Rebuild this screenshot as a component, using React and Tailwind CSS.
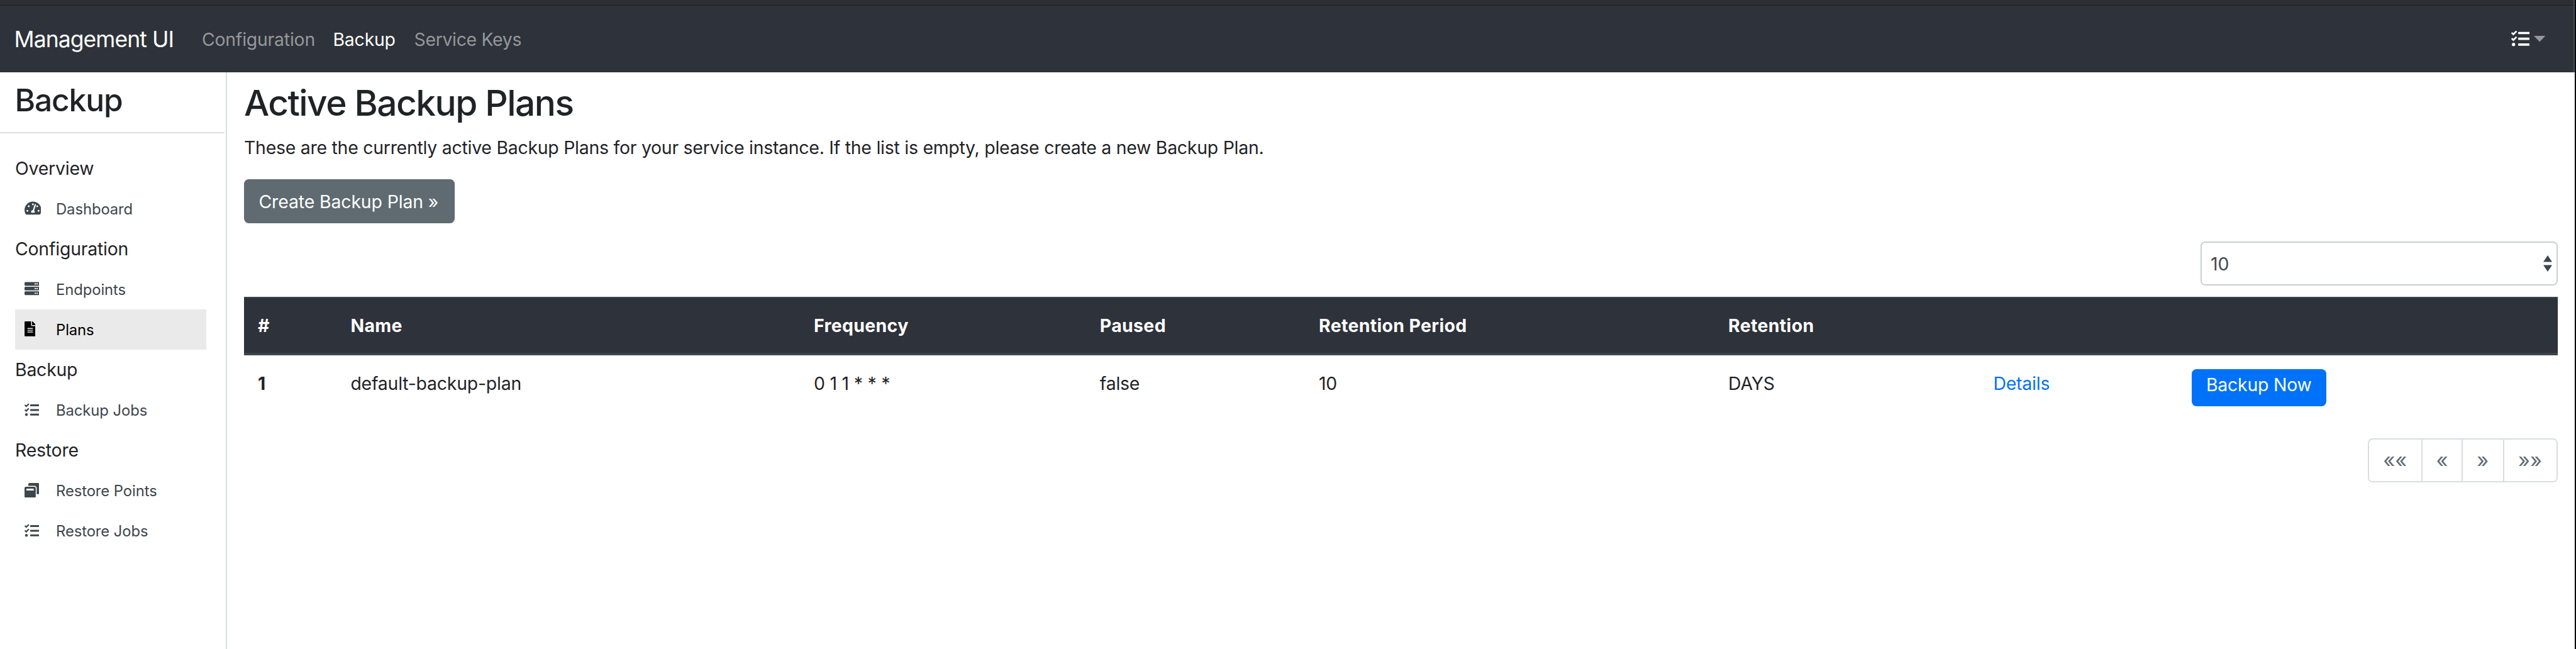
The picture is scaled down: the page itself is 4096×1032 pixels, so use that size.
import React from "react";
import { FaTachometerAlt, FaServer, FaFileAlt, FaTasks, FaWindowRestore } from "react-icons/fa";

const iconBox = "h-[23.8px] w-[23.8px]";

const sections = [
  { title: "Overview", items: [{ label: "Dashboard", Icon: FaTachometerAlt, size: "h-[23.8px] w-[26.8px]" }] },
  {
    title: "Configuration",
    items: [
      { label: "Endpoints", Icon: FaServer, size: iconBox },
      { label: "Plans", Icon: FaFileAlt, size: "h-[23.8px] w-[17.9px]", active: true },
    ],
  },
  { title: "Backup", items: [{ label: "Backup Jobs", Icon: FaTasks, size: iconBox }] },
  {
    title: "Restore",
    items: [
      { label: "Restore Points", Icon: FaWindowRestore, size: iconBox },
      { label: "Restore Jobs", Icon: FaTasks, size: iconBox },
    ],
  },
];

const columns =
  "grid grid-cols-[147.4px_736.6px_454.8px_348.2px_651.1px_421.4px_315.3px_1fr] [&>*]:pl-[22px]";

function Navbar() {
  return (
    <header className="h-[115.3px] border-r-2 border-[#4a4e52] bg-[#2e323a]">
      <div className="h-[9px] border-b border-[#1d2022] bg-[#2b2f31]" />
      <nav className="flex h-[106px] items-center pl-[22.5px] pr-[44.5px] text-[28.4px] tracking-[-0.007em] text-[#95989b]">
        <a className="w-[298.4px] pt-[1px] text-[35.5px] tracking-[-0.026em] text-white">Management UI</a>
        <a className="w-[208.6px] pt-[2px]">Configuration</a>
        <a className="w-[129px] pt-[2px] text-white">Backup</a>
        <a className="pt-[2px] tracking-[-0.011em]">Service Keys</a>
        <div className="ml-auto flex items-center gap-[7px]">
          <FaTasks className="h-[29.3px] w-[29.3px] text-white" />
          <svg className="mt-[-1px] h-[9.5px] w-[18.3px]" viewBox="0 0 18 9" preserveAspectRatio="none" fill="#95989b">
            <path d="M0 0h18L9 9z" />
          </svg>
        </div>
      </nav>
    </header>
  );
}

function Sidebar() {
  return (
    <aside className="w-[360.5px] shrink-0 border-r-2 border-[#d9dee2]">
      <div className="h-[97.2px] w-[357px] border-b-2 border-[#d9dee2] pl-[23.5px]">
        <h2 className="text-[49.7px] leading-[88.3px] font-medium tracking-[-0.023em]">Backup</h2>
      </div>
      <div className="mt-[23.6px] ml-[24px] w-[304px]">
        {sections.map((s) => (
          <section key={s.title}>
            <h3 className="text-[28.4px] leading-[64.06px] tracking-[-0.007em]">{s.title}</h3>
            {s.items.map(({ label, Icon, size, active }) => (
              <a
                key={label}
                className={`flex h-[64.06px] items-center pt-[1px] pl-[14.5px] text-[23.8px] tracking-[-0.003em] ${active ? "bg-[#eaeaea] text-black" : "text-[#3e464c]"}`}
              >
                <span className="w-[50.5px] shrink-0 pb-[3px]">
                  <Icon className={size} />
                </span>
                {label}
              </a>
            ))}
          </section>
        ))}
      </div>
    </aside>
  );
}

function PageButton({ children, className }) {
  return (
    <button className={`flex items-center justify-center border-[#d9dee2] ${className}`}>{children}</button>
  );
}

function Main() {
  return (
    <main className="flex flex-1 flex-col items-start pl-[27.5px] pr-[27.5px] text-[28.4px] tracking-[-0.007em]">
      <h1 className="h-[94px] text-[56.8px] leading-[98.2px] font-medium tracking-[-0.027em]">Active Backup Plans</h1>
      <p className="leading-[52px] tracking-[-0.0083em]">
        These are the currently active Backup Plans for your service instance. If the list is empty, please create a new
        Backup Plan.
      </p>
      <button className="mt-[24.2px] flex h-[69.5px] w-[335px] items-center rounded-[7.5px] bg-[#5f6b71] pt-[2px] pl-[23.5px] tracking-[-0.004em] text-white">
        Create Backup Plan »
      </button>
      <div className="mt-[29.3px] flex h-[69.6px] w-[567.4px] items-center justify-between self-end rounded-[7.5px] border-2 border-[#c9cfd4] pr-[7px] pl-[14px] text-[#43494f]">
        <span className="pt-[2px]">10</span>
        <svg className="h-[26px] w-[14px]" viewBox="0 0 14 26" fill="#3e464c">
          <path d="M7 0l7 10.5H0zM7 26l7-10.5H0z" />
        </svg>
      </div>
      <div className="mt-[18.3px] w-full">
        <div
          className={`${columns} h-[93.3px] items-center border-t-2 border-b-4 border-[#3c454c] bg-[#2e323a] font-bold tracking-[0.013em] text-white`}
        >
          <span>#</span>
          <span>Name</span>
          <span>Frequency</span>
          <span>Paused</span>
          <span>Retention Period</span>
          <span>Retention</span>
        </div>
        <div className={`${columns} h-[102px] items-start pt-[22px] leading-[46px]`}>
          <span className="font-bold">1</span>
          <span>default-backup-plan</span>
          <span>0 1 1 * * *</span>
          <span>false</span>
          <span>10</span>
          <span>DAYS</span>
          <span className="text-[#0072f9]">Details</span>
          <div>
            <button className="h-[58.5px] w-[214px] rounded-[7.5px] bg-[#0072f9] pb-[8.5px] text-center leading-[50px] text-white">
              Backup Now
            </button>
          </div>
        </div>
      </div>
      <div className="mt-[29.8px] flex h-[69.6px] self-end rounded-[7.5px] border-2 border-[#d9dee2] text-[32.5px] text-[#5f6b71] tracking-normal">
        <PageButton className="w-[85.5px] border-r-2">««</PageButton>
        <PageButton className="w-[64px] border-r-2">«</PageButton>
        <PageButton className="w-[65.5px] border-r-2">»</PageButton>
        <PageButton className="w-[83px]">»»</PageButton>
      </div>
    </main>
  );
}

export default function App() {
  return (
    <div className="flex h-[1032px] w-[4096px] flex-col overflow-hidden border-r-2 border-[#05080c] bg-white font-['Inter',sans-serif] text-[#1f2326]">
      <Navbar />
      <div className="flex flex-1">
        <Sidebar />
        <Main />
      </div>
    </div>
  );
}
